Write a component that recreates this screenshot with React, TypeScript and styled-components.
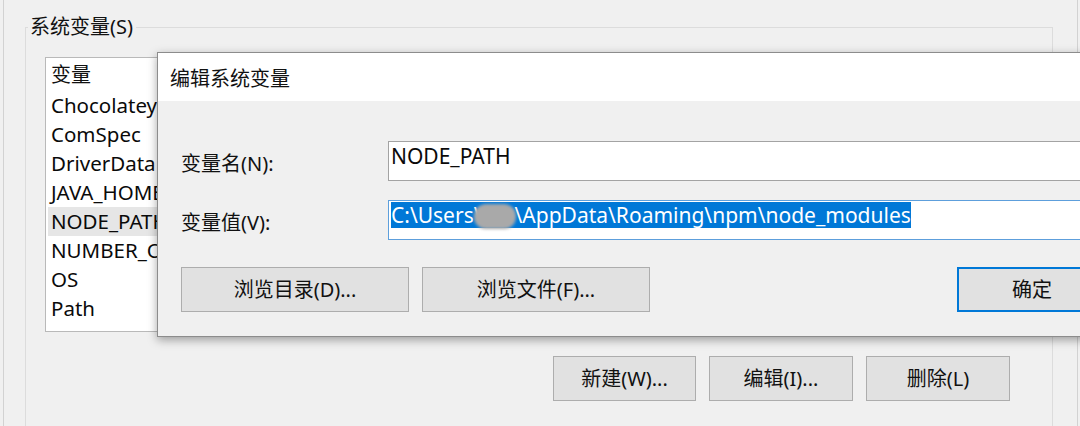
import React from "react";
import styled, { createGlobalStyle } from "styled-components";

const Global = createGlobalStyle`
  html, body { margin: 0; padding: 0; background: #f0f0f0; }
  body {
    font-family: "Noto Sans", "Noto Sans CJK SC", sans-serif;
    color: #0a0a0a;
  }
  * { box-sizing: border-box; }
`;

const Screen = styled.div`
  position: relative;
  width: 1080px;
  height: 426px;
  overflow: hidden;
  background: #f0f0f0;
`;

const Window = styled.div`
  margin-left: 3px;
  width: 1075px;
  height: 426px;
  border-left: 1px solid #d2d2d2;
  border-right: 1px solid #d2d2d2;
  padding-left: 21px;
  padding-top: 14px;
`;

const GroupBox = styled.fieldset`
  margin: 0;
  width: 1028px;
  height: 440px;
  border: 1px solid #dcdcdc;
  padding: 17px 0 0 19px;
  min-width: 0;
`;

const Legend = styled.legend`
  font-size: 20px;
  line-height: 26px;
  padding: 0 3px 0 2px;
  margin-left: -17px;
  color: #111;
`;

const ListBox = styled.div`
  width: 986px;
  height: 275px;
  background: #fff;
  border: 1px solid #b9b9b9;
  overflow: hidden;
`;

const ListHeader = styled.div`
  height: 33px;
  line-height: 33px;
  padding-left: 5px;
  font-size: 20px;
  color: #111;
`;

const ListRow = styled.div<{ $selected?: boolean }>`
  height: 29px;
  line-height: 29px;
  margin: 0 2px;
  padding-left: 3px;
  font-size: 20.5px;
  color: #0a0a0a;
  background: ${(p) => (p.$selected ? "#e6e6e6" : "transparent")};
`;

const ButtonRow = styled.div`
  display: flex;
  justify-content: flex-end;
  gap: 13px;
  margin-top: 24px;
  padding-right: 42px;
`;

const WinButton = styled.button<{ $w: number; $primary?: boolean }>`
  width: ${(p) => p.$w}px;
  height: 45px;
  flex: none;
  background: #e1e1e1;
  border: 1px solid ${(p) => (p.$primary ? "#0078d7" : "#adadad")};
  box-shadow: ${(p) => (p.$primary ? "inset 0 0 0 1px #0078d7" : "none")};
  font-family: "Noto Sans", "Noto Sans CJK SC", sans-serif;
  font-size: 20px;
  color: #111;
  padding: 0;
  line-height: 43px;
`;

const Dialog = styled.div`
  position: absolute;
  left: 157px;
  top: 52px;
  width: 1000px;
  height: 285px;
  background: #f0f0f0;
  border: 1px solid #8c8c8c;
  box-shadow: 0 3px 9px rgba(0, 0, 0, 0.35);
  display: flex;
  flex-direction: column;
`;

const TitleBar = styled.div`
  height: 48px;
  background: #fff;
  padding-left: 12px;
  display: flex;
  align-items: center;
  font-size: 20px;
  color: #111;
`;

const DialogBody = styled.div`
  display: grid;
  grid-template-columns: 207px 1fr;
  row-gap: 19px;
  align-items: center;
  padding: 40px 0 0 23px;
`;

const FieldLabel = styled.div`
  font-size: 20px;
  color: #111;
  padding-top: 3px;
`;

const TextField = styled.div<{ $focused?: boolean }>`
  height: 40px;
  background: #fff;
  border: 1px solid ${(p) => (p.$focused ? "#5d9fdc" : "#a3a3a3")};
  padding: 1px 2px;
  font-size: 21px;
  line-height: 26px;
  white-space: nowrap;
  color: #0a0a0a;
`;

const Selection = styled.span`
  background: #0078d7;
  color: #fff;
  display: inline-block;
  height: 26px;
`;

const Blur = styled.span`
  display: inline-block;
  width: 42px;
  height: 25px;
  margin-left: -8px;
  margin-right: -1px;
  margin-bottom: -6px;
  border-radius: 12px;
  background: #a9a9a9;
  filter: blur(1.5px);
`;

const DialogActions = styled.div`
  grid-column: 1 / -1;
  display: flex;
  gap: 13px;
  margin-top: 8px;
`;

const Spacer = styled.div`
  width: 281px;
  flex: none;
`;

const variables = [
  "Chocolatey",
  "ComSpec",
  "DriverData",
  "JAVA_HOME",
  "NODE_PATH",
  "NUMBER_OF_PROCESSORS",
  "OS",
  "Path",
];

export default function App() {
  return (
    <Screen>
      <Global />
      <Window>
        <GroupBox>
          <Legend>系统变量(S)</Legend>
          <ListBox>
            <ListHeader>变量</ListHeader>
            {variables.map((v) => (
              <ListRow key={v} $selected={v === "NODE_PATH"}>
                {v}
              </ListRow>
            ))}
          </ListBox>
          <ButtonRow>
            <WinButton $w={143}>新建(W)...</WinButton>
            <WinButton $w={144}>编辑(I)...</WinButton>
            <WinButton $w={144}>删除(L)</WinButton>
          </ButtonRow>
        </GroupBox>
      </Window>
      <Dialog>
        <TitleBar>编辑系统变量</TitleBar>
        <DialogBody>
          <FieldLabel>变量名(N):</FieldLabel>
          <TextField>NODE_PATH</TextField>
          <FieldLabel>变量值(V):</FieldLabel>
          <TextField $focused>
            <Selection>
              C:\Users\
              <Blur />
              \AppData\Roaming\npm\node_modules
            </Selection>
          </TextField>
          <DialogActions>
            <WinButton $w={228}>浏览目录(D)...</WinButton>
            <WinButton $w={228}>浏览文件(F)...</WinButton>
            <Spacer />
            <WinButton $w={150} $primary>
              确定
            </WinButton>
          </DialogActions>
        </DialogBody>
      </Dialog>
    </Screen>
  );
}
